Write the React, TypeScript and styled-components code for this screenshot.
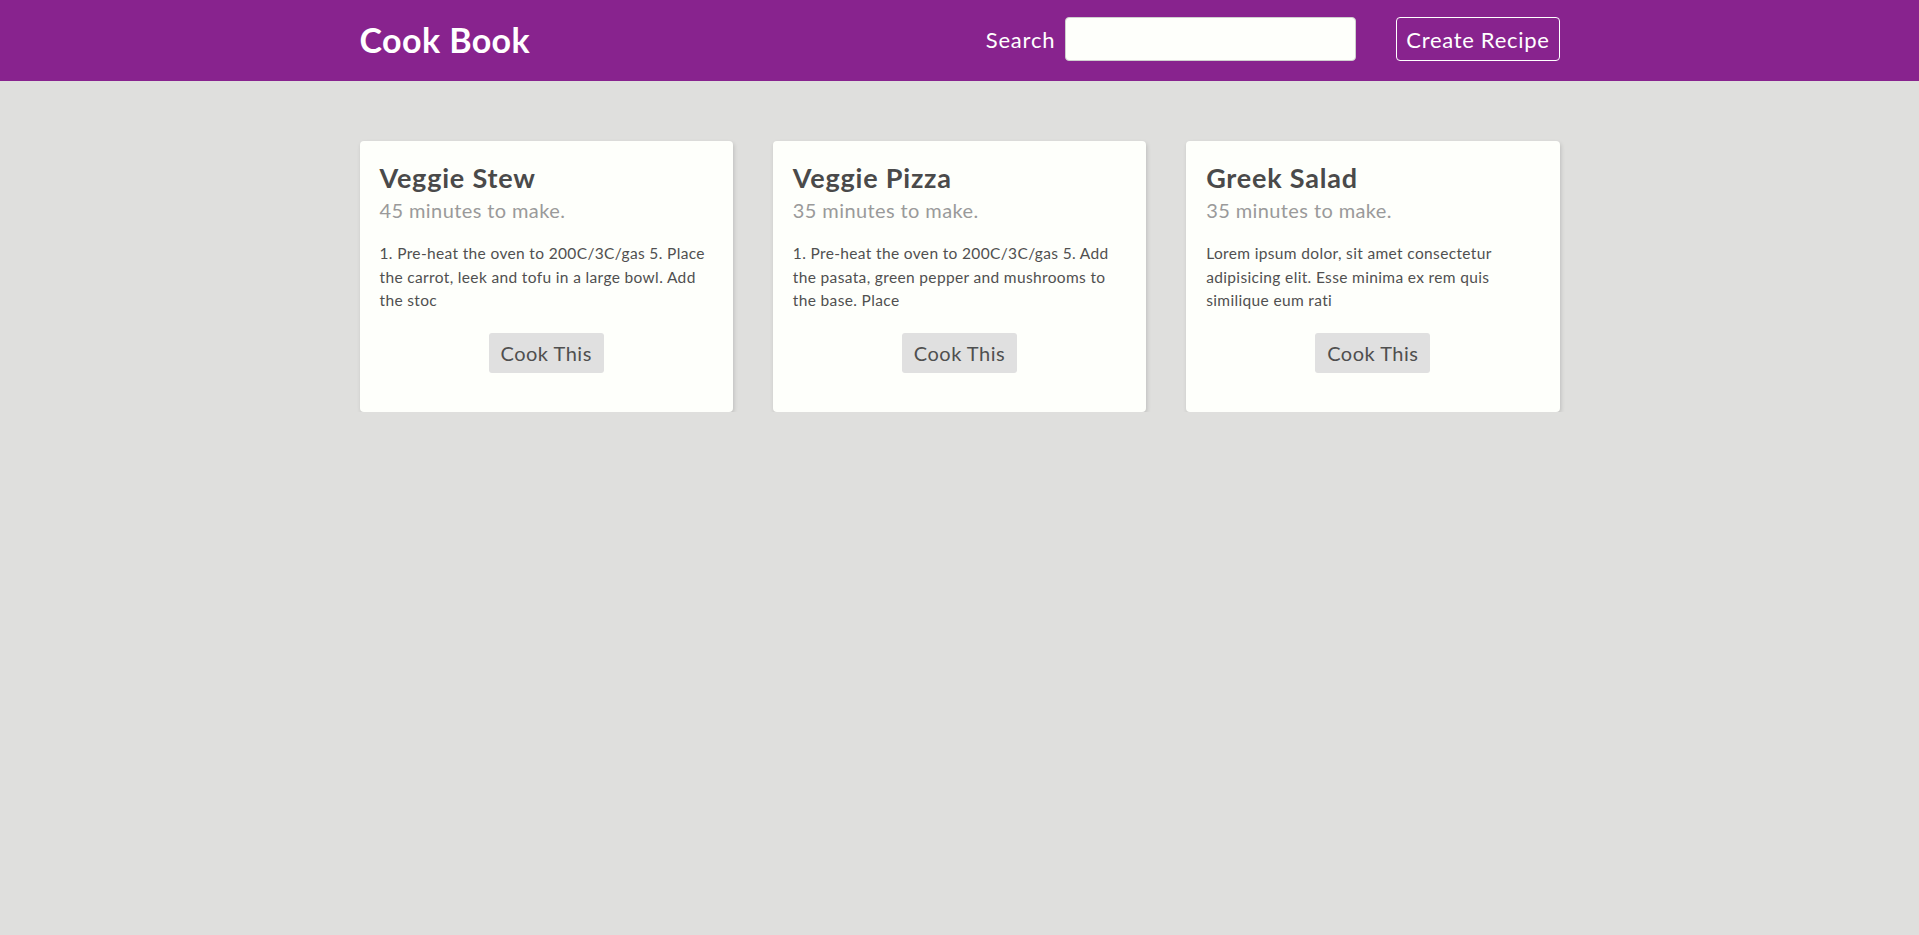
import { FunctionComponent } from 'react';
import styled, { createGlobalStyle } from 'styled-components';

const GlobalStyle = createGlobalStyle`
  * {
    box-sizing: border-box;
  }

  body {
    margin: 0;
    background: #dfdfdd;
    font-family: Lato, "Open Sans", "Liberation Sans", sans-serif;
    color: #4a4a4a;
  }
`;

const Header = styled.header`
  background: #88238e;
  height: 81px;
  padding: 17px 0 20px;
`;

const Container = styled.div`
  width: 1200px;
  margin: 0 auto;
`;

const HeaderInner = styled(Container)`
  display: flex;
  align-items: center;
  justify-content: space-between;
  height: 44px;
`;

const Logo = styled.h1`
  margin: 0;
  font-size: 34px;
  font-weight: 700;
  color: #ffffff;
  letter-spacing: 0.4px;
`;

const Nav = styled.div`
  display: flex;
  align-items: center;
  gap: 40px;
`;

const SearchField = styled.label`
  display: flex;
  align-items: center;
  gap: 10px;
  font-size: 22px;
  color: #ffffff;
  letter-spacing: 0.8px;
`;

const SearchInput = styled.input`
  width: 291px;
  height: 44px;
  border: 1px solid #cfcfcf;
  border-radius: 4px;
  background: #fefffb;
  font-size: 18px;
  padding: 0 10px;
  outline: none;
`;

const OutlineButton = styled.button`
  height: 44px;
  padding: 0 9px;
  border: 1px solid #ffffff;
  border-radius: 4px;
  background: transparent;
  color: #ffffff;
  font-family: inherit;
  font-size: 22px;
  letter-spacing: 0.7px;
  cursor: pointer;
`;

const Grid = styled(Container)`
  display: grid;
  grid-template-columns: repeat(3, 1fr);
  gap: 40px;
  margin-top: 60px;
  align-items: start;
`;

const Card = styled.article`
  display: flex;
  flex-direction: column;
  background: #fefffb;
  border-radius: 4px;
  box-shadow: 1px 2px 4px rgba(0, 0, 0, 0.15);
  padding: 20px 20px 39px;
`;

const CardTitle = styled.h2`
  margin: 0;
  font-size: 27px;
  line-height: 34px;
  font-weight: 700;
  color: #4a4a4a;
  letter-spacing: 0.8px;
`;

const CardTime = styled.p`
  margin: 0;
  font-size: 20px;
  line-height: 30px;
  color: #9a9a9a;
  letter-spacing: 0.4px;
`;

const CardMethod = styled.p`
  margin: 17px 0 0;
  font-size: 15.5px;
  line-height: 23.5px;
  color: #505050;
  letter-spacing: 0.35px;
`;

const CookButton = styled.button`
  align-self: center;
  margin-top: 20px;
  height: 40px;
  padding: 0 12px;
  border: none;
  border-radius: 3px;
  background: #e0e0e0;
  color: #4f4f4f;
  font-family: inherit;
  font-size: 20px;
  letter-spacing: 0.5px;
  cursor: pointer;
`;

interface Recipe {
  title: string;
  minutes: number;
  method: string;
}

const recipes: Recipe[] = [
  {
    title: 'Veggie Stew',
    minutes: 45,
    method: '1. Pre-heat the oven to 200C/3C/gas 5. Place the carrot, leek and tofu in a large bowl. Add the stoc',
  },
  {
    title: 'Veggie Pizza',
    minutes: 35,
    method: '1. Pre-heat the oven to 200C/3C/gas 5. Add the pasata, green pepper and mushrooms to the base. Place',
  },
  {
    title: 'Greek Salad',
    minutes: 35,
    method: 'Lorem ipsum dolor, sit amet consectetur adipisicing elit. Esse minima ex rem quis similique eum rati',
  },
];

const RecipeCard: FunctionComponent<{ recipe: Recipe }> = ({ recipe }) => (
  <Card>
    <CardTitle>{recipe.title}</CardTitle>
    <CardTime>{`${recipe.minutes} minutes to make.`}</CardTime>
    <CardMethod>{recipe.method}</CardMethod>
    <CookButton type="button">Cook This</CookButton>
  </Card>
);

export default function App() {
  return (
    <>
      <GlobalStyle />
      <Header>
        <HeaderInner>
          <Logo>Cook Book</Logo>
          <Nav>
            <SearchField>
              Search
              <SearchInput type="text" />
            </SearchField>
            <OutlineButton type="button">Create Recipe</OutlineButton>
          </Nav>
        </HeaderInner>
      </Header>
      <Grid>
        {recipes.map((recipe) => (
          <RecipeCard key={recipe.title} recipe={recipe} />
        ))}
      </Grid>
    </>
  );
}
